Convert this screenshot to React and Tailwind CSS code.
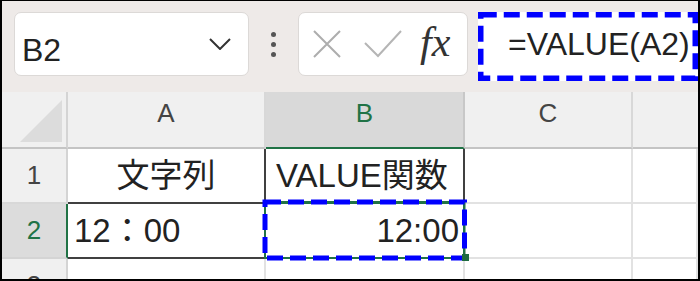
const GREEN = '#217346'

function ColHead({ children, selected, last }) {
    return (
        <div
            className={`flex items-center justify-center pb-[12px] text-[26px] border-b-2 ${last ? '' : 'border-r-2'} ${
                selected
                    ? 'bg-[#d9d9d9] text-[#217346] border-b-[#217346] border-r-[#c8c8c8]'
                    : 'bg-[#f0f0f0] text-[#444] border-b-[#c4c4c4] border-r-[#d8d8d8]'
            }`}
        >
            {children}
        </div>
    )
}

function RowHead({ children, selected }) {
    return (
        <div
            className={`flex items-center justify-center text-[26px] border-r-2 border-b-2 ${
                selected
                    ? 'bg-[#dcdcdc] text-[#217346] border-r-[#217346] border-b-[#d4d4d4]'
                    : 'bg-[#f0f0f0] text-[#444] border-r-[#d4d4d4] border-b-[#d8d8d8]'
            }`}
        >
            {children}
        </div>
    )
}

function Cell({ className = '', children }) {
    return <div className={`border-r-2 border-b-2 flex items-center text-[33px] text-[#222] ${className}`}>{children}</div>
}

export default function App() {
    return (
        <div className="w-[700px] h-[281px] overflow-hidden bg-white border-black border-t border-l-2 border-r-2 border-b-2 flex flex-col font-['Liberation_Sans','Noto_Sans_CJK_JP',sans-serif]">
            {/* toolbar */}
            <div className="h-[91px] shrink-0 bg-[#eeeae8] flex items-start pt-[11px] pl-[12px]">
                <div className="w-[235px] h-[64px] rounded-[7px] bg-white border border-[#dcd9d7] flex items-center pl-[7px] pr-[17px] pt-[12px]">
                    <span className="text-[32px] leading-none text-[#222]">B2</span>
                    <svg className="ml-auto -mt-[12px]" width="22" height="12" viewBox="0 0 22 12">
                        <polyline points="1,1 11,11 21,1" fill="none" stroke="#333" strokeWidth="2" />
                    </svg>
                </div>

                <div className="ml-[22px] w-[5px] h-[64px] flex flex-col items-center justify-center gap-[5px]">
                    <span className="w-[5px] h-[5px] rounded-full bg-[#555]" />
                    <span className="w-[5px] h-[5px] rounded-full bg-[#555]" />
                    <span className="w-[5px] h-[5px] rounded-full bg-[#555]" />
                </div>

                <div className="ml-[22px] w-[170px] h-[64px] rounded-[7px] bg-white border border-[#dcd9d7] flex items-center pl-[14px]">
                    <svg width="28" height="28" viewBox="0 0 28 28">
                        <path d="M1 1 L27 27 M27 1 L1 27" stroke="#adadad" strokeWidth="2" fill="none" />
                    </svg>
                    <svg className="ml-[23px]" width="38" height="28" viewBox="0 0 38 28">
                        <polyline points="1,13 14,26 37,1" stroke="#b5b5b5" strokeWidth="2" fill="none" />
                    </svg>
                    <span className="ml-[18px] -mt-[4px] text-[42px] leading-none italic text-[#333] font-['Liberation_Serif',serif]">fx</span>
                </div>

                <div className="ml-[10px] w-[220px] h-[69px] relative bg-white flex items-center pl-[30px] pb-[6px]">
                    <span className="text-[32px] leading-none text-[#222] whitespace-nowrap">=VALUE(A2)</span>
                    <svg className="absolute inset-0" width="220" height="69" viewBox="0 0 220 69">
                        <rect x="2.75" y="2.75" width="214.5" height="63.5" fill="none" stroke="#0000ff" strokeWidth="5.5" strokeDasharray="16 7" />
                    </svg>
                </div>
            </div>

            {/* grid */}
            <div className="grid grid-cols-[66px_198px_199px_168px_1fr] grid-rows-[57px_55px_55px_55px]">
                <div className="bg-[#f0f0f0] border-r-2 border-b-2 border-r-[#d4d4d4] border-b-[#c4c4c4]">
                    <svg width="64" height="55" viewBox="0 0 64 55">
                        <polygon points="18,50 60,50 60,8" fill="#dcdcdc" />
                    </svg>
                </div>
                <ColHead>A</ColHead>
                <ColHead selected>B</ColHead>
                <ColHead>C</ColHead>
                <ColHead last />

                <RowHead>1</RowHead>
                <Cell className="justify-center border-r-[#404040] border-b-[#404040]">文字列</Cell>
                <Cell className="pl-[10px] border-r-[#404040] border-b-[#217346]">VALUE関数</Cell>
                <Cell className="border-[#e2e2e2]" />
                <Cell className="border-[#e2e2e2]" />

                <RowHead selected>2</RowHead>
                <Cell className="pl-[6px] border-r-[#404040] border-b-[#404040]">12：00</Cell>
                <Cell className="relative justify-end pr-[4px] border-r-[#217346] border-b-[#217346]">
                    12:00
                    <svg className="absolute left-[-5px] top-[-6px]" width="212" height="68" viewBox="0 0 212 68">
                        <rect x="4" y="4" width="199.5" height="56" fill="none" stroke={GREEN} strokeWidth="2" />
                        <rect x="4" y="4" width="199.5" height="56" fill="none" stroke="#0000ff" strokeWidth="5" strokeDasharray="16 7" />
                        <rect x="201" y="56" width="7" height="7" fill="#1e6b40" />
                    </svg>
                </Cell>
                <Cell className="border-[#e2e2e2]" />
                <Cell className="border-[#e2e2e2]" />

                <RowHead>3</RowHead>
                <Cell className="border-[#e2e2e2]" />
                <Cell className="border-[#e2e2e2]" />
                <Cell className="border-[#e2e2e2]" />
                <Cell className="border-[#e2e2e2]" />
            </div>
        </div>
    )
}
